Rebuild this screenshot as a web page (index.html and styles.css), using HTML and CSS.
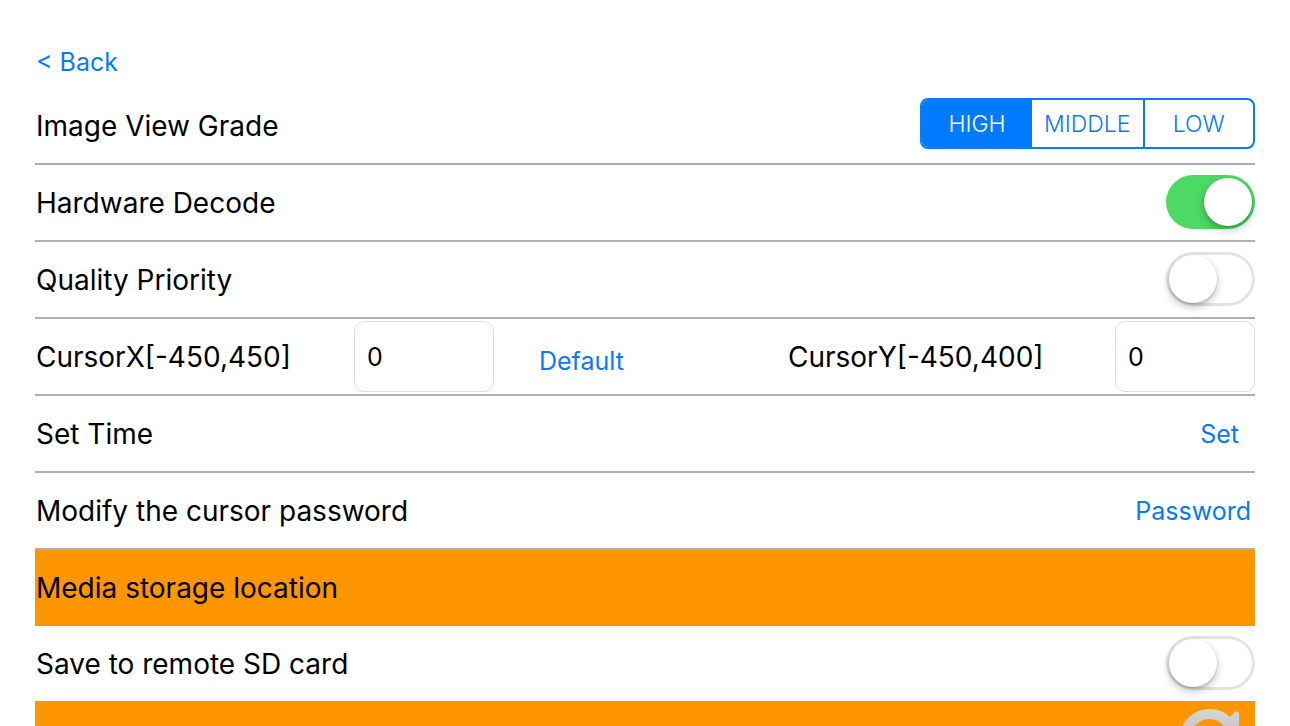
FILE: index.html
```html
<!DOCTYPE html>
<html lang="en">
<head>
<meta charset="utf-8">
<meta name="viewport" content="width=device-width, initial-scale=1">
<title>Settings</title>
<link rel="stylesheet" href="styles.css">
</head>
<body>
<main class="settings">
  <nav class="nav"><a class="link" href="#">&lt; Back</a></nav>

  <fieldset class="row" aria-labelledby="grade-label">
    <span class="label" id="grade-label">Image View Grade</span>
    <div class="segments">
      <label class="segment"><input type="radio" name="grade" checked><span>HIGH</span></label>
      <label class="segment"><input type="radio" name="grade"><span>MIDDLE</span></label>
      <label class="segment"><input type="radio" name="grade"><span>LOW</span></label>
    </div>
  </fieldset>

  <div class="row">
    <label class="label" for="decode">Hardware Decode</label>
    <input class="switch" type="checkbox" role="switch" id="decode" checked>
  </div>

  <div class="row">
    <label class="label" for="quality">Quality Priority</label>
    <input class="switch" type="checkbox" role="switch" id="quality">
  </div>

  <div class="row row-cursor">
    <label class="label" for="cursor-x">CursorX[-450,450]</label>
    <input class="field" type="text" id="cursor-x" value="0">
    <button class="link link-default" type="button">Default</button>
    <label class="label" for="cursor-y">CursorY[-450,400]</label>
    <input class="field" type="text" id="cursor-y" value="0">
  </div>

  <div class="row">
    <span class="label">Set Time</span>
    <button class="link link-set" type="button">Set</button>
  </div>

  <div class="row">
    <span class="label">Modify the cursor password</span>
    <button class="link link-password" type="button">Password</button>
  </div>

  <h2 class="row row-heading"><span class="label">Media storage location</span></h2>

  <div class="row row-plain">
    <label class="label" for="remote-sd">Save to remote SD card</label>
    <input class="switch" type="checkbox" role="switch" id="remote-sd">
  </div>

  <div class="row row-heading row-refresh">
    <button class="refresh" type="button" aria-label="Refresh">
      <svg viewBox="0 0 62 62" width="62" height="62" aria-hidden="true">
        <defs>
          <linearGradient id="silver" x1="0" y1="0" x2="0" y2="1">
            <stop offset="0" stop-color="#d6d6d6"/>
            <stop offset="1" stop-color="#aaaaaa"/>
          </linearGradient>
        </defs>
        <path fill="url(#silver)" d="M31 1C39 1 46 4 51 9L56 4Q60 2 60 6V25H40Q38 24 40 22L44 17C40 13 36 11 31 11A20 20 0 1 0 50 37H60A30 30 0 1 1 31 1Z"/>
      </svg>
    </button>
  </div>
</main>
</body>
</html>
```
FILE: styles.css
```css
* {
  box-sizing: border-box;
}

body {
  margin: 0;
  background: #fff;
  color: #000;
  font-family: Inter, "Liberation Sans", sans-serif;
  font-size: 28px;
}

.settings {
  height: 100vh;
  padding: 36px 35px 0;
  overflow: hidden;
}

.nav {
  display: flex;
  align-items: center;
  height: 52px;
  padding-left: 1px;
}

.link {
  padding: 0;
  border: 0;
  background: none;
  color: #087af5;
  font: inherit;
  font-size: 25px;
  text-decoration: none;
  cursor: pointer;
}

.row {
  display: flex;
  align-items: center;
  justify-content: space-between;
  min-width: 0;
  height: 77px;
  margin: 0;
  padding: 0;
  border: 0;
  border-bottom: 2px solid #b0b0b2;
}

.label {
  padding-left: 1px;
  white-space: nowrap;
}

.segments {
  display: grid;
  grid-template-columns: 110px 1fr 1fr;
  width: 335px;
  height: 51px;
  margin-bottom: 4px;
  overflow: hidden;
  border: 2px solid #087cf7;
  border-radius: 8px;
}

.segment {
  display: flex;
  color: #087af5;
  font-size: 23px;
  font-weight: 300;
  cursor: pointer;
}

.segment + .segment + .segment {
  border-left: 2px solid #087cf7;
}

.segment input {
  position: absolute;
  opacity: 0;
}

.segment span {
  flex: 1;
  display: flex;
  align-items: center;
  justify-content: center;
}

.segment input:checked + span {
  background: #007aff;
  color: #fff;
}

.switch {
  appearance: none;
  display: flex;
  align-items: center;
  width: 89px;
  height: 54px;
  margin: 0 0 2px;
  padding: 0 3px;
  border-radius: 27px;
  background: #fff;
  box-shadow: inset 0 0 0 3px #e4e4e4;
  cursor: pointer;
}

.switch::before {
  content: "";
  width: 48px;
  height: 48px;
  border-radius: 50%;
  background: #fff;
  box-shadow: 0 4px 8px rgba(0, 0, 0, 0.25), 0 1px 2px rgba(0, 0, 0, 0.15);
}

.switch:checked {
  justify-content: flex-end;
  background: #4cd964;
  box-shadow: none;
}

.row-cursor {
  display: grid;
  grid-template-columns: 319px 140px 1fr 328px 140px;
}

.field {
  width: 100%;
  height: 71px;
  padding: 0 12px;
  border: 1px solid #dedede;
  border-radius: 10px;
  background: #fff;
  color: #000;
  font: inherit;
  font-size: 25px;
}

.link-default {
  justify-self: start;
  margin-left: 45px;
  padding-top: 8px;
}

.link-set {
  margin-right: 16px;
}

.link-password {
  margin-right: 4px;
}

.row-heading {
  height: 76px;
  border-bottom: 0;
  background: #ff9500;
  font-size: inherit;
  font-weight: 400;
}

.row-plain {
  height: 75px;
  border-bottom: 0;
}

.row-refresh {
  justify-content: flex-end;
  padding-right: 14px;
}

.refresh {
  display: flex;
  padding: 0;
  border: 0;
  background: none;
  cursor: pointer;
}
```
